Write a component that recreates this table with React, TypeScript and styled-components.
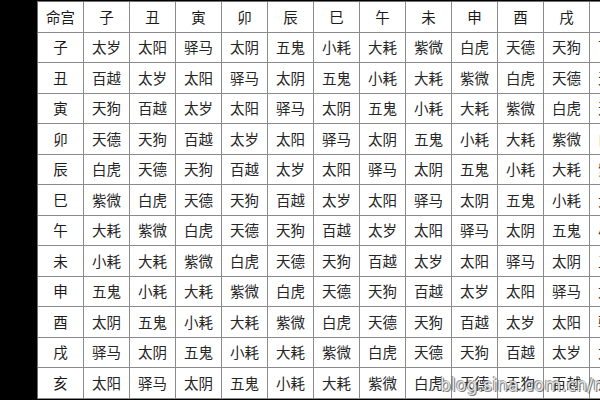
import React from 'react';
import styled, { createGlobalStyle } from 'styled-components';

const GlobalStyle = createGlobalStyle`
  html, body {
    margin: 0;
    padding: 0;
    background: #000;
    overflow: hidden;
  }
`;

const Page = styled.div`
  position: relative;
  width: 600px;
  height: 400px;
  overflow: hidden;
  background: #000;
  padding: 1px 0 0 37px;
  box-sizing: border-box;
`;

const Grid = styled.div`
  display: grid;
  grid-template-columns: repeat(13, 46px);
  grid-auto-rows: 30.5px;
  width: max-content;
  border-top: 1px solid #6f6f6f;
  border-left: 1px solid #6f6f6f;
  background: #fff;
  font-family: "Noto Sans CJK SC", "Noto Sans", sans-serif;
`;

const Cell = styled.div<{ $head?: boolean }>`
  display: flex;
  align-items: center;
  justify-content: center;
  box-sizing: border-box;
  border-right: 1px solid #8a8a8a;
  border-bottom: 1px solid #8a8a8a;
  background: #fff;
  color: ${(p) => (p.$head ? '#1a1a1a' : '#262626')};
  font-size: 14.5px;
  line-height: 1;
  letter-spacing: 0;
  white-space: nowrap;
`;

const Watermark = styled.span`
  position: absolute;
  left: 440px;
  top: 375px;
  font-family: "DejaVu Sans", "Liberation Sans", sans-serif;
  font-size: 17px;
  letter-spacing: 0.2px;
  color: rgba(255, 255, 255, 0.85);
  text-shadow: 0 0 1px #555, 1px 1px 0 rgba(80, 80, 80, 0.7), -1px -1px 0 rgba(80, 80, 80, 0.5);
  white-space: nowrap;
`;

const branches = ['子', '丑', '寅', '卯', '辰', '巳', '午', '未', '申', '酉', '戌', '亥'];
const stars = ['太岁', '太阳', '驿马', '太阴', '五鬼', '小耗', '大耗', '紫微', '白虎', '天德', '天狗', '百越'];

const App: React.FC = () => {
  return (
    <>
      <GlobalStyle />
      <Page>
        <Grid>
          <Cell $head>命宫</Cell>
          {branches.map((b) => (
            <Cell $head key={'h' + b}>{b}</Cell>
          ))}
          {branches.map((row, i) => (
            <React.Fragment key={row}>
              <Cell $head>{row}</Cell>
              {branches.map((col, j) => (
                <Cell key={row + col}>{stars[(j - i + 12) % 12]}</Cell>
              ))}
            </React.Fragment>
          ))}
        </Grid>
        <Watermark>blog.sina.com.cn/m</Watermark>
      </Page>
    </>
  );
};

export default App;
